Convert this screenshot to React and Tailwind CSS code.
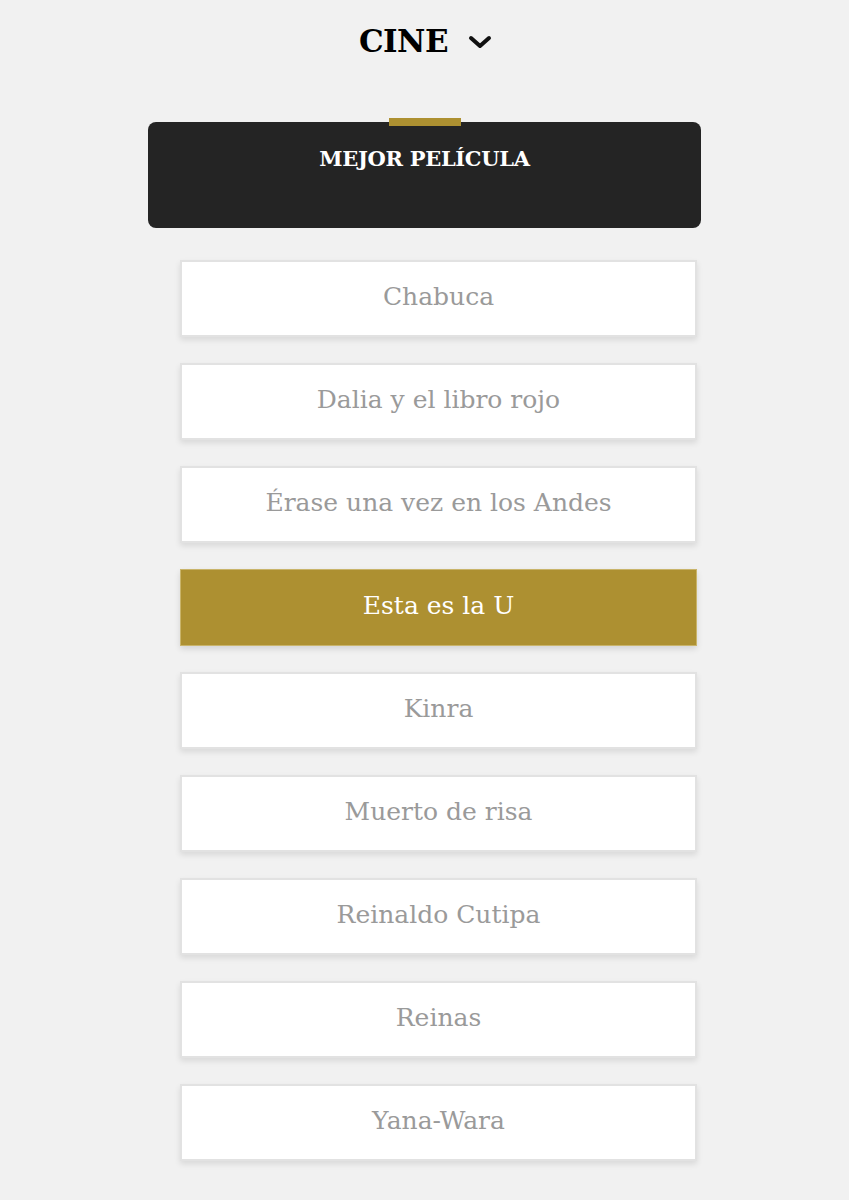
import React from "react";

const items = [
  "Chabuca",
  "Dalia y el libro rojo",
  "Érase una vez en los Andes",
  "Esta es la U",
  "Kinra",
  "Muerto de risa",
  "Reinaldo Cutipa",
  "Reinas",
  "Yana-Wara",
];

export default function App() {
  return (
    <div
      className="w-[849px] min-h-[1200px] bg-[#f1f1f1] flex flex-col"
      style={{ fontFamily: '"DejaVu Serif", "Liberation Serif", serif' }}
    >
      <div className="h-[82px] flex items-center justify-center gap-[20px] pl-[2px]">
        <span className="text-[31px] font-bold text-black tracking-[-0.5px] leading-none">CINE</span>
        <svg width="24" height="16" viewBox="0 0 24 16" className="mt-[2px]">
          <path d="M3 4 L12 12 L21 4" fill="none" stroke="#111" strokeWidth="4" strokeLinecap="round" strokeLinejoin="round" />
        </svg>
      </div>
      <div className="h-[40px]" />
      <div className="ml-[148px] w-[553px] h-[106px] bg-[#242424] rounded-[8px] relative flex justify-center pt-[25px]">
        <div className="absolute top-[-4px] left-[241px] w-[72px] h-[8px] bg-[#ad9031]" />
        <span className="text-white font-bold text-[21px] leading-[24px] tracking-[-0.3px]">MEJOR PELÍCULA</span>
      </div>
      <div className="ml-[180px] w-[517px] mt-[32px] flex flex-col gap-[26px]">
        {items.map((t) =>
          t === "Esta es la U" ? (
            <div
              key={t}
              className="h-[77px] bg-[#ad9031] border border-[#c9b46a] shadow-[0_3px_6px_rgba(0,0,0,0.12)] flex items-center justify-center pb-[4px] text-white text-[25px]"
            >
              {t}
            </div>
          ) : (
            <div
              key={t}
              className="h-[77px] bg-white border-2 border-[#e2e2e2] shadow-[0_3px_6px_rgba(0,0,0,0.1)] flex items-center justify-center pb-[4px] text-[#9a9a9a] text-[25px]"
            >
              {t}
            </div>
          )
        )}
      </div>
    </div>
  );
}
